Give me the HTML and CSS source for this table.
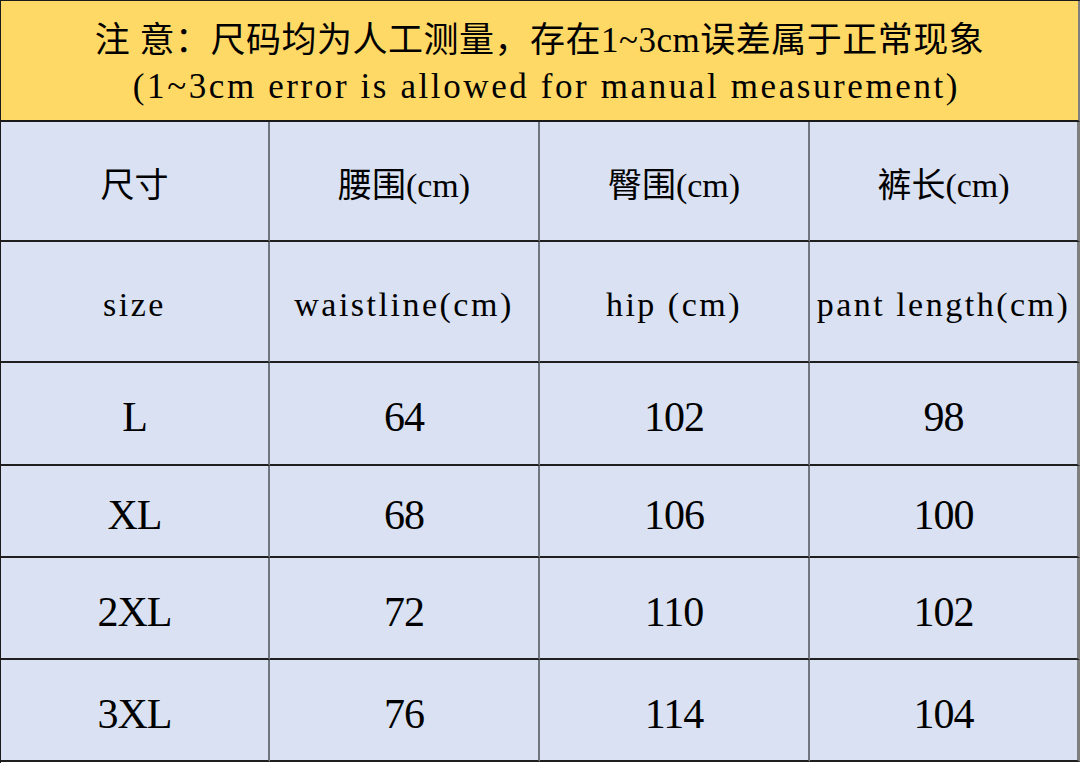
FILE: index.html
```html
<!DOCTYPE html>
<html lang="zh">
<head>
<meta charset="utf-8">
<title>尺码表</title>
<link rel="stylesheet" href="styles.css">
</head>
<body>
<div class="sheet">
  <div class="notice">
    <div class="line cn">注 意：尺码均为人工测量，存在1~3cm误差属于正常现象</div>
    <div class="line en">(1~3cm error is allowed for manual measurement)</div>
  </div>
  <div class="grid">
    <div class="cell head r1">尺寸</div>
    <div class="cell head r1">腰围(cm)</div>
    <div class="cell head r1">臀围(cm)</div>
    <div class="cell head r1 last">裤长(cm)</div>

    <div class="cell head lat r2">size</div>
    <div class="cell head lat r2">waistline(cm)</div>
    <div class="cell head lat r2">hip (cm)</div>
    <div class="cell head lat r2 last">pant length(cm)</div>

    <div class="cell num r3">L</div>
    <div class="cell num r3">64</div>
    <div class="cell num r3">102</div>
    <div class="cell num r3 last">98</div>

    <div class="cell num r4">XL</div>
    <div class="cell num r4">68</div>
    <div class="cell num r4">106</div>
    <div class="cell num r4 last">100</div>

    <div class="cell num r5">2XL</div>
    <div class="cell num r5">72</div>
    <div class="cell num r5">110</div>
    <div class="cell num r5 last">102</div>

    <div class="cell num r6">3XL</div>
    <div class="cell num r6">76</div>
    <div class="cell num r6">114</div>
    <div class="cell num r6 last">104</div>
  </div>
</div>
</body>
</html>
```
FILE: styles.css
```css
* { box-sizing: border-box; }
html, body { margin: 0; padding: 0; background: #ffffff; }
body {
  font-family: "Liberation Serif", "Noto Sans CJK SC", serif;
  color: #000;
}
.sheet {
  width: 1080px;
  height: 763px;
  border-left: 1px solid #1a1a1a;
  border-top: 1px solid #1a1a1a;
  display: flex;
  flex-direction: column;
}
.notice {
  height: 121px;
  padding-top: 6px;
  background: #ffd966;
  border-bottom: 2px solid #1a1a1a;
  border-right: 2px solid #7f7f7f;
  display: flex;
  flex-direction: column;
  justify-content: center;
  align-items: center;
  font-size: 35px;
  line-height: 46px;
}
.line { white-space: pre; }
.line.cn { letter-spacing: 0.5px; }
.line.en { letter-spacing: 2.6px; padding-left: 14px; }
.grid {
  display: grid;
  grid-template-columns: 269px 270px 270px 270px;
  grid-template-rows: 120px 121px 103px 92px 102px 102px;
  background: #d9e1f2;
}
.cell {
  display: flex;
  align-items: center;
  justify-content: center;
  border-right: 2px solid #70757f;
  border-bottom: 2px solid #1f1f1f;
  white-space: nowrap;
  overflow: hidden;
}
.cell.last { border-right: 3px solid #7f7f7f; }
.head { font-size: 34px; padding-top: 2px; }
.head.lat { letter-spacing: 2.5px; padding-top: 6px; }
.num { font-size: 42px; padding-top: 7px; letter-spacing: -1px; }
```
